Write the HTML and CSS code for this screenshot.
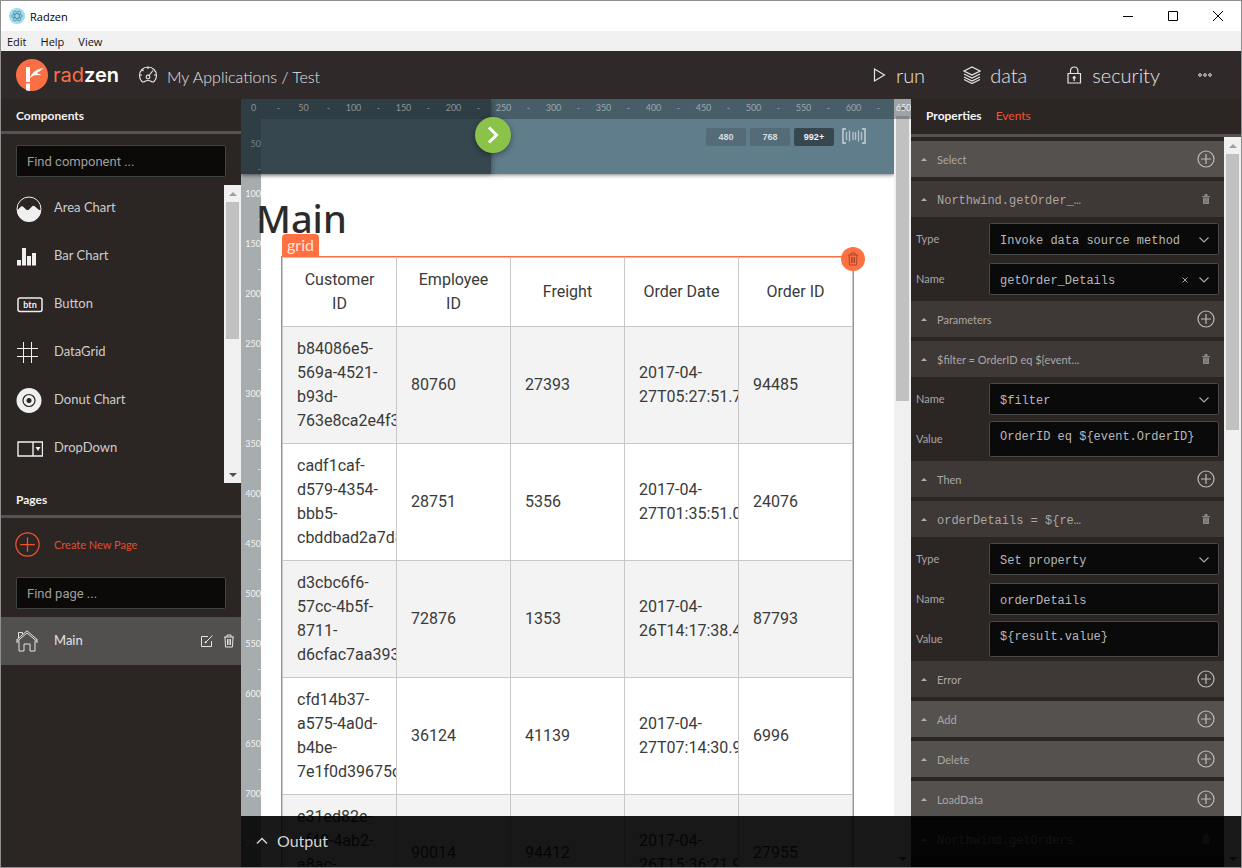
FILE: index.html
```html
<!DOCTYPE html>
<html lang="en">
<head>
<meta charset="utf-8">
<title>Radzen</title>
<link rel="stylesheet" href="styles.css">
</head>
<body>
<svg class="defs" width="0" height="0" aria-hidden="true">
  <symbol id="plus" viewBox="0 0 18 18"><circle cx="9" cy="9" r="8"/><path d="M9 4v10M4 9h10"/></symbol>
  <symbol id="trash" viewBox="0 0 12 14"><path d="M1 3h10M4 3V1h4v2M2 3l.5 10h7L10 3M4.500 5v6M6 5v6M7.500 5v6"/></symbol>
  <symbol id="bin" viewBox="0 0 8 10"><path d="M0 2h8v1H0zM2.500 0h3v2h-3zM1 3.500h6V10H1z" fill="currentColor" stroke="none"/><path d="M3 4v5M5 4v5" stroke="#5c5756" stroke-width=".6"/></symbol>
  <symbol id="chev" viewBox="0 0 12 8"><path d="M1.500 1.500 6 6l4.500-4.500"/></symbol>
</svg>
<div class="window">
  <div class="titlebar">
    <svg class="app-icon" viewBox="0 0 16 16"><circle cx="8" cy="8" r="8" fill="#9edcf0"/><g fill="none" stroke="#4f8294" stroke-width=".7"><ellipse cx="8" cy="8" rx="5.500" ry="2.200"/><ellipse cx="8" cy="8" rx="5.500" ry="2.200" transform="rotate(60 8 8)"/><ellipse cx="8" cy="8" rx="5.500" ry="2.200" transform="rotate(120 8 8)"/></g></svg>
    <span class="title">Radzen</span>
    <button class="winbtn" aria-label="Minimize"><svg viewBox="0 0 12 12"><path d="M1 6.500h10"/></svg></button>
    <button class="winbtn" aria-label="Maximize"><svg viewBox="0 0 12 12"><path d="M1.500 1.500h9v9h-9z"/></svg></button>
    <button class="winbtn" aria-label="Close"><svg viewBox="0 0 12 12"><path d="m1 1 10 10M11 1 1 11"/></svg></button>
  </div>
  <nav class="menubar"><button>Edit</button><button>Help</button><button>View</button></nav>

  <header class="topbar">
    <a class="brand" href="#">
      <svg viewBox="0 0 32 32"><circle cx="16" cy="16" r="16" fill="#fa7044"/><path d="M10 8h4v15h-4zM10 24.500h4V32q-2 0-4-.8z" fill="#fff"/><path d="M14 18Q18 10 27.500 9q-3 3-7 5.500 3 .3 5 1.800-4-.6-7 0-2 .7-4.500 2.700z" fill="#fff"/></svg>
      <span class="brand-name"><span class="brand-rad">rad</span>zen</span>
    </a>
    <a class="crumb" href="#">
      <svg viewBox="0 0 20 18"><path d="M4 15.500a8.500 8.500 0 1 1 12 0q-1.500 1-2.500 0-3.500-2-7 0-1 1-2.500 0zM10 1v2M2 9h2M16 9h2M4.500 4l1 1"/><circle cx="10" cy="11" r="1.800"/><path d="m11 9.500 4-5"/></svg>
      <span>My Applications / Test</span>
    </a>
    <nav class="actions">
      <button class="act-run"><svg viewBox="0 0 18 18"><path d="M5.500 3v12l10-6z"/></svg>run</button>
      <button class="act-data"><svg viewBox="0 0 18 18"><path d="m1 5 8-4 8 4-8 4zM1 8l8 4 8-4M1 11l8 4 8-4M1 13.500l8 4 8-4"/></svg>data</button>
      <button class="act-sec"><svg viewBox="0 0 18 18"><path d="M3 7.500h12.500V17H3zM5.500 7.500V5q0-4 3.700-4t3.700 4v2.500M9.200 11v4"/><circle cx="9.200" cy="11.500" r="1"/></svg>security</button>
      <button class="act-more" aria-label="More"><svg viewBox="0 0 14 6"><circle cx="2" cy="3" r="1.300"/><circle cx="7" cy="3" r="1.300"/><circle cx="12" cy="3" r="1.300"/></svg></button>
    </nav>
  </header>

  <main class="workspace">
    <aside class="sidebar">
      <h2 class="side-title">Components</h2>
      <div class="search"><input type="text" aria-label="Find component" placeholder="Find component ..."></div>
      <div class="comp-wrap">
        <ul class="comp-list">
          <li><svg viewBox="0 0 28 28"><circle cx="14" cy="15" r="12" fill="none" stroke="#eee" stroke-width="1"/><path d="M2 16q2-1 3.500-3 1.500-1.500 3.500.5l2 2q1.500 1 3 0l3-3q1.500-1.500 3.500.5l3 2.500q1 .8 2.500.5A12 12 0 0 1 2 16z" fill="#f0f0f0"/></svg><span>Area Chart</span></li>
          <li><svg viewBox="0 0 28 28"><path d="M2 18h4v5.500H2zM7 6h4v17.500H7zM12 14h4v9.500h-4zM17 11h4v12.500h-4z" fill="#f0f0f0"/></svg><span>Bar Chart</span></li>
          <li><svg viewBox="0 0 28 28"><rect x="3" y="8" width="24" height="13.500" rx="2" fill="none" stroke="#f0f0f0" stroke-width="1.500"/><text x="15" y="18" class="btn-glyph">btn</text></svg><span>Button</span></li>
          <li><svg viewBox="0 0 28 28"><path d="M8.500 4v21M16.500 4v21M2 10.500h21M2 18.500h21" stroke="#f0f0f0" fill="none"/></svg><span>DataGrid</span></li>
          <li><svg viewBox="0 0 28 28"><circle cx="14" cy="14.500" r="12.500" fill="#f0f0f0"/><circle cx="14" cy="14.500" r="6" fill="none" stroke="#2b2524" stroke-width="1.200"/><circle cx="14" cy="14.500" r="2.500" fill="#2b2524"/></svg><span>Donut Chart</span></li>
          <li><svg viewBox="0 0 28 28"><path d="M3 8h24.500v14H3zM18 8v14" stroke="#f0f0f0" stroke-width="1.400" fill="none"/><path d="M20.500 13h5L23 17z" fill="#f0f0f0"/></svg><span>DropDown</span></li>
        </ul>
        <div class="scrollbar"><i class="up"></i><b class="thumb thumb-comp"></b><i class="down"></i></div>
      </div>
      <h2 class="side-title">Pages</h2>
      <a class="new-page" href="#"><svg viewBox="0 0 24 24"><circle cx="12" cy="12" r="11.200"/><path d="M12 5v14M5 12h14"/></svg>Create New Page</a>
      <div class="search search-page"><input type="text" aria-label="Find page" placeholder="Find page ..."></div>
      <div class="page-row">
        <svg class="home" viewBox="0 0 22 22"><path d="M1 11.500 11 3l10 8.500M3 10.500V21h5v-7h6v7h5V10.500M1 9V13M21 9V13M2.500 8V2.500h4v2M1 9.500 11 .8l10 8.700"/></svg>
        <span class="page-name">Main</span>
        <button aria-label="Edit page"><svg viewBox="0 0 14 14"><path d="M8 2.500H1.500v10h10V7M5.500 8.500 12.500 1.500M5 9l1.500-.5L5.500 7.500z"/></svg></button>
        <button aria-label="Delete page"><svg viewBox="0 0 12 14"><use href="#trash"/></svg></button>
      </div>
    </aside>

    <section class="canvas">
      <div class="page">
        <div class="page-head">
          <div class="page-head-side"></div>
          <button class="drawer" aria-label="Open drawer"><svg viewBox="0 0 36 36"><path d="m14 10.500 7.500 7.500-7.500 7.500"/></svg></button>
          <div class="sizes">
            <button>480</button><button>768</button><button class="on">992+</button>
            <svg viewBox="0 0 24 16"><path d="M4 1H1v14h3M20 1h3v14h-3" stroke-width="1.800"/><path d="M4.500 4v8M7.500 2.500v11M11 4v8M13.500 4v8M16.500 2.500v11M19.500 4v8" stroke-width="1.400"/></svg>
          </div>
        </div>
        <h1>Main</h1>
        <div class="frame">
          <span class="tag">grid</span>
          <button class="badge" aria-label="Delete grid"><svg viewBox="0 0 12 14"><use href="#trash"/></svg></button>
          <table>
            <thead><tr><th>Customer<br>ID</th><th>Employee<br>ID</th><th>Freight</th><th>Order Date</th><th>Order ID</th></tr></thead>
            <tbody>
              <tr><td>b84086e5-<br>569a-4521-<br>b93d-<br>763e8ca2e4f3</td><td>80760</td><td>27393</td><td>2017-04-<br>27T05:27:51.7</td><td>94485</td></tr>
              <tr><td>cadf1caf-<br>d579-4354-<br>bbb5-<br>cbddbad2a7d8</td><td>28751</td><td>5356</td><td>2017-04-<br>27T01:35:51.0</td><td>24076</td></tr>
              <tr><td>d3cbc6f6-<br>57cc-4b5f-<br>8711-<br>d6cfac7aa393</td><td>72876</td><td>1353</td><td>2017-04-<br>26T14:17:38.4</td><td>87793</td></tr>
              <tr><td>cfd14b37-<br>a575-4a0d-<br>b4be-<br>7e1f0d39675c</td><td>36124</td><td>41139</td><td>2017-04-<br>27T07:14:30.9</td><td>6996</td></tr>
              <tr><td>e31ed82e-<br>cf40-4ab2-<br>a8ac-<br>5b1f0d3967c2</td><td>90014</td><td>94412</td><td>2017-04-<br>26T15:36:21.9</td><td>27955</td></tr>
            </tbody>
          </table>
        </div>
      </div>
      <div class="scrollbar"><i class="up"></i><b class="thumb thumb-canvas"></b><i class="down"></i></div>
      <div class="ruler-x"><span>0</span><span>-</span><span>50</span><span>-</span><span>100</span><span>-</span><span>150</span><span>-</span><span>200</span><span>-</span><span>250</span><span>-</span><span>300</span><span>-</span><span>350</span><span>-</span><span>400</span><span>-</span><span>450</span><span>-</span><span>500</span><span>-</span><span>550</span><span>-</span><span>600</span><span>-</span><span>650</span></div>
      <div class="ruler-y"><span class="dim">50</span><span class="dim">-</span><span>100</span><span>-</span><span>150</span><span>-</span><span>200</span><span>-</span><span>250</span><span>-</span><span>300</span><span>-</span><span>350</span><span>-</span><span>400</span><span>-</span><span>450</span><span>-</span><span>500</span><span>-</span><span>550</span><span>-</span><span>600</span><span>-</span><span>650</span><span>-</span><span>700</span><span>-</span><span>750</span></div>
    </section>

    <aside class="inspector">
      <nav class="tabs"><button>Properties</button><button class="active">Events</button></nav>
      <div class="props">
        <div class="prop-list">
          <div class="head lvl1"><i class="tri"></i><span>Select</span><button aria-label="Add Select handler"><svg class="add"><use href="#plus"/></svg></button></div>
          <div class="head"><i class="tri"></i><span class="mono">Northwind.getOrder_…</span><button aria-label="Delete"><svg class="bin"><use href="#bin"/></svg></button></div>
          <div class="fields">
            <div class="field"><label for="f1">Type</label><div class="box"><select id="f1"><option>Invoke data source method</option></select><svg class="chev"><use href="#chev"/></svg></div></div>
            <div class="field"><label for="f2">Name</label><div class="box"><select id="f2"><option>getOrder_Details</option></select><button class="clear" aria-label="Clear"><svg viewBox="0 0 8 8"><path d="m1.500 1.500 5 5M6.500 1.500l-5 5"/></svg></button><svg class="chev"><use href="#chev"/></svg></div></div>
          </div>
          <div class="head"><i class="tri"></i><span>Parameters</span><button aria-label="Add parameter"><svg class="add"><use href="#plus"/></svg></button></div>
          <div class="head"><i class="tri"></i><span>$filter = OrderID eq ${event...</span><button aria-label="Delete"><svg class="bin"><use href="#bin"/></svg></button></div>
          <div class="fields">
            <div class="field"><label for="f3">Name</label><div class="box"><select id="f3"><option>$filter</option></select><svg class="chev"><use href="#chev"/></svg></div></div>
            <div class="field"><label for="f4">Value</label><div class="box"><textarea id="f4" rows="1">OrderID eq ${event.OrderID}</textarea></div></div>
          </div>
          <div class="head"><i class="tri"></i><span>Then</span><button aria-label="Add Then action"><svg class="add"><use href="#plus"/></svg></button></div>
          <div class="head"><i class="tri"></i><span class="mono">orderDetails = ${re…</span><button aria-label="Delete"><svg class="bin"><use href="#bin"/></svg></button></div>
          <div class="fields">
            <div class="field"><label for="f5">Type</label><div class="box"><select id="f5"><option>Set property</option></select><svg class="chev"><use href="#chev"/></svg></div></div>
            <div class="field"><label for="f6">Name</label><div class="box"><input id="f6" type="text" value="orderDetails"></div></div>
            <div class="field"><label for="f7">Value</label><div class="box"><textarea id="f7" rows="1">${result.value}</textarea></div></div>
          </div>
          <div class="head"><i class="tri"></i><span>Error</span><button aria-label="Add Error action"><svg class="add"><use href="#plus"/></svg></button></div>
          <div class="head lvl1"><i class="tri"></i><span>Add</span><button aria-label="Add Add handler"><svg class="add"><use href="#plus"/></svg></button></div>
          <div class="head lvl1"><i class="tri"></i><span>Delete</span><button aria-label="Add Delete handler"><svg class="add"><use href="#plus"/></svg></button></div>
          <div class="head lvl1"><i class="tri"></i><span>LoadData</span><button aria-label="Add LoadData handler"><svg class="add"><use href="#plus"/></svg></button></div>
          <div class="head"><i class="tri"></i><span class="mono">Northwind.getOrders</span><button aria-label="Delete"><svg class="bin"><use href="#bin"/></svg></button></div>
        </div>
        <div class="scrollbar"><i class="up"></i><b class="thumb thumb-props"></b><i class="down"></i></div>
      </div>
    </aside>

    <button class="output"><svg viewBox="0 0 12 8"><path d="M1 6.500 6 1.500l5 5"/></svg>Output</button>
  </main>
</div>
</body>
</html>
```
FILE: styles.css
```css
* { box-sizing: border-box; }
body { margin: 0; font-family: Lato, sans-serif; background: #2b2524; }
button, a { font: inherit; color: inherit; text-decoration: none; background: none; border: 0; padding: 0; }
svg { fill: none; stroke: currentColor; flex: none; }
.defs { position: absolute; }
ul { list-style: none; margin: 0; padding: 0; }

.window { height: 100vh; display: flex; flex-direction: column; border: 1px solid #8f8f8f; overflow: hidden; }

.titlebar { flex: none; height: 30px; display: flex; align-items: center; padding-right: 1px; background: #fff; color: #000; }
.app-icon { width: 16px; height: 16px; margin: 0 5px 0 8px; stroke: none; }
.title { flex: 1; font: 11px "Open Sans", sans-serif; }
.winbtn { width: 45px; height: 30px; display: grid; place-items: center; }
.winbtn svg { width: 12px; height: 12px; }
.menubar { flex: none; height: 20px; display: flex; gap: 14px; padding-left: 6px; background: #f0f0f0; color: #111; font: 11px "Open Sans", sans-serif; }

.topbar { flex: none; height: 48px; display: flex; align-items: center; padding: 0 29px 0 15px; background: #2f2929; color: #e6e4e3; }
.brand { display: flex; align-items: center; gap: 5px; }
.brand svg { width: 32px; height: 32px; stroke: none; }
.brand-name { font: 600 20px/28px Inter, sans-serif; color: #fff; }
.brand-rad { color: #fa7044; font-weight: 400; }
.crumb { display: flex; align-items: center; gap: 9px; margin-left: 19px; font-size: 16px; }
.crumb span { font-weight: 300; padding-top: 2px; }
.crumb svg { width: 20px; height: 18px; stroke-width: 1.200; }
.actions { margin-left: auto; display: flex; align-items: center; font-size: 20px; font-weight: 300; }
.actions button { display: flex; align-items: center; gap: 9px; }
.actions svg { width: 18px; height: 18px; stroke-width: 1.200; }
.act-data, .act-sec, .act-more { margin-left: 38px; }
.actions .act-more svg { width: 14px; height: 6px; stroke-width: 1; }

.workspace { position: relative; flex: 1; min-height: 0; display: grid; grid-template-columns: 240px minmax(0, 1fr) 330px; }

.sidebar { background: #2b2524; color: #cfcdcc; overflow: hidden; }
.side-title { margin: 0; padding: 0 15px; height: 35px; border-bottom: 3px solid #565251; font-size: 12px; line-height: 34px; font-weight: 700; color: #f2f2f2; }
.search { padding: 11px 15px 8px; }
.search input { width: 100%; height: 32px; padding: 0 10px; border: 1px solid #3f4243; border-radius: 2px; background: #0c0a09; color: #ccc; font: 13px Roboto, sans-serif; }
.search input::placeholder { color: #a09e9d; opacity: 1; }
.comp-wrap { display: flex; height: 298px; }
.comp-list { flex: 1; overflow: hidden; }
.comp-list li { display: flex; align-items: center; gap: 11px; height: 48px; padding: 0 15px 2px 14px; font-size: 13px; }
.comp-list li span { padding-bottom: 2px; }
.comp-list svg { width: 28px; height: 28px; stroke: none; }
.btn-glyph { font: 700 9px Lato, sans-serif; fill: #f0f0f0; text-anchor: middle; }

.scrollbar { flex: none; width: 17px; background: #f0f0f0; display: flex; flex-direction: column; align-items: center; }
.scrollbar .up, .scrollbar .down { height: 17px; display: grid; place-items: center; }
.scrollbar .down { margin-top: auto; }
.scrollbar .up::before, .scrollbar .down::before { content: ""; border: 4px solid transparent; border-bottom: 4px solid #a0a0a0; border-top: 0; }
.scrollbar .down::before { border-bottom: 0; border-top: 4px solid #505050; }
.thumb { width: 13px; background: #c1c1c1; }
.thumb-comp { height: 137px; }
.thumb-canvas { height: 285px; }
.thumb-props { height: 276px; }

.new-page { display: flex; align-items: center; gap: 14px; height: 48px; padding: 4px 14px 0; color: #e04f30; font-size: 11px; }
.new-page svg { width: 25px; height: 25px; stroke-width: 1.200; color: #f3522f; }
.page-row { display: flex; align-items: center; height: 48px; padding: 0 5px 0 15px; background: #52504e; color: #e4e4e4; }
.home { width: 22px; height: 22px; }
.page-name { flex: 1; padding: 0 0 3px 16px; font-size: 13px; }
.page-row button { margin-left: 8px; display: grid; place-items: center; }
.page-row button svg { width: 14px; height: 14px; }
.search-page { padding-top: 11px; }

.canvas { position: relative; display: flex; background: #fff; overflow: hidden; }
.page { flex: 1; min-width: 0; height: 100%; overflow: hidden; color: #2b2b2b; }
.page-head { position: relative; display: flex; justify-content: space-between; height: 75px; background: #607d8b; box-shadow: 0 1px 4px rgba(0,0,0,.5); }
.page-head-side { width: 250px; background: #37474f; box-shadow: 1px 0 5px rgba(0,0,0,.35); }
.drawer { position: absolute; z-index: 3; left: 234px; top: 18px; width: 36px; height: 36px; border-radius: 50%; background: #8bc34a; color: #fff; box-shadow: 0 2px 6px rgba(0,0,0,.4); }
.drawer svg { display: block; width: 36px; height: 36px; stroke-width: 3; }
.sizes { display: flex; gap: 4px; padding: 29px 28px 0 0; }
.sizes button { width: 40px; height: 18px; border-radius: 2px; background: #536c78; color: #d6dcdf; font: 700 9px "Liberation Sans", sans-serif; }
.sizes .on { background: #37474f; color: #eef1f2; }
.sizes svg { width: 24px; height: 16px; margin-left: 4px; color: #b3c1c8; }
.page h1 { margin: 0; height: 82px; padding: 16px 0 0 15px; font: 500 38px/56px "Noto Sans", sans-serif; position: relative; z-index: 2; }
.frame { position: relative; z-index: 3; margin: 0 40px; border: 1px solid #e8765a; border-top-color: #fa7044; }
.tag { position: absolute; left: 0; top: -23px; height: 23px; padding: 0 5px; border-radius: 4px 4px 0 0; background: #ff7043; color: #ffe4da; font-size: 16px; line-height: 22px; }
.badge { position: absolute; right: -12px; top: -10px; width: 24px; height: 24px; border-radius: 50%; background: #ff7043; color: #a44a2c; display: grid; place-items: center; }
.badge svg { width: 12px; height: 14px; }
table { width: 100%; table-layout: fixed; border-collapse: collapse; font: 16px/24px Roboto, sans-serif; color: #3a3a3a; }
th, td { border: 1px solid #c8c8c8; padding: 10px 14px; overflow: hidden; text-align: left; font-weight: 400; }
th { text-align: center; }
td { padding-right: 0; white-space: nowrap; }
tbody tr:nth-child(odd) { background: #f3f3f3; }

.ruler-x, .ruler-y { position: absolute; left: 0; top: 0; z-index: 1; background: rgba(35,47,53,.4); font-size: 9px; overflow: hidden; display: flex; }
.ruler-x { right: 0; height: 20px; color: rgba(255,255,255,.45); }
.ruler-x span { flex: none; width: 25px; text-align: center; line-height: 18px; }
.ruler-x span:last-child { color: #eee; }
.ruler-y { top: 20px; bottom: 0; width: 20px; padding-top: 12px; flex-direction: column; align-items: flex-end; color: #f2f3f3; }
.ruler-y span { flex: none; height: 25px; line-height: 25px; }
.ruler-y .dim { color: rgba(255,255,255,.35); }

.inspector { display: flex; flex-direction: column; min-height: 0; background: #2b2524; color: #aaa7a5; overflow: hidden; }
.tabs { flex: none; display: flex; gap: 14px; height: 38px; padding: 0 15px; border-bottom: 3px solid #565251; font-size: 12px; }
.tabs button { height: 33px; font-weight: 700; color: #f4f4f4; }
.tabs .active { color: #f3522f; font-weight: 400; }
.props { flex: 1; min-height: 0; display: flex; }
.prop-list { flex: 1; min-width: 0; padding-top: 4px; overflow: hidden; }
.head { display: flex; align-items: center; height: 36px; padding: 0 9px 0 10px; background: #3e3837; font-size: 11px; }
.head + .head { margin-top: 4px; }
.head.lvl1 { background: #55514f; }
.head span { flex: 1; padding-left: 10px; }
.head .mono { padding-top: 4px; }
.tri { border: 3px solid transparent; border-top: 0; border-bottom: 3px solid #b3b0ae; }
.head button { width: 18px; height: 18px; display: grid; place-items: center; color: #bfbcba; }
.add { width: 18px; height: 18px; stroke-width: 1.200; }
.head .bin { width: 8px; height: 10px; color: #8c8886; }
.mono, .box select, .box input, .box textarea { font: 12px/16px "Courier New", "Liberation Mono", monospace; }
.fields { padding: 2px 0; }
.field { display: flex; align-items: center; height: 40px; padding: 0 5px; }
.field label { width: 73px; padding-bottom: 2px; font-size: 11px; }
.box { position: relative; flex: 1; display: flex; }
.box select, .box input, .box textarea { width: 100%; height: 32px; margin: 0; padding: 3px 10px 0; border: 1px solid #4a4a4a; border-radius: 2px; background: #0b0a0a; color: #b8b8b8; appearance: none; }
.box .clear { color: #aaa; }
.box textarea { height: 36px; padding-top: 7px; resize: none; overflow: hidden; }
.chev { position: absolute; right: 9px; top: 13px; width: 12px; height: 8px; stroke-width: 1.200; pointer-events: none; }
.clear { position: absolute; right: 30px; top: 13px; width: 8px; height: 8px; }
.clear svg { display: block; width: 8px; height: 8px; }

.output { position: absolute; z-index: 5; left: 240px; right: 0; bottom: 0; height: 51px; padding: 0 15px 2px; display: flex; align-items: center; gap: 9px; background: rgba(0,0,0,.9); color: #d4d4d4; font-size: 16px; }
.output svg { width: 12px; height: 8px; stroke-width: 1.500; }
```
